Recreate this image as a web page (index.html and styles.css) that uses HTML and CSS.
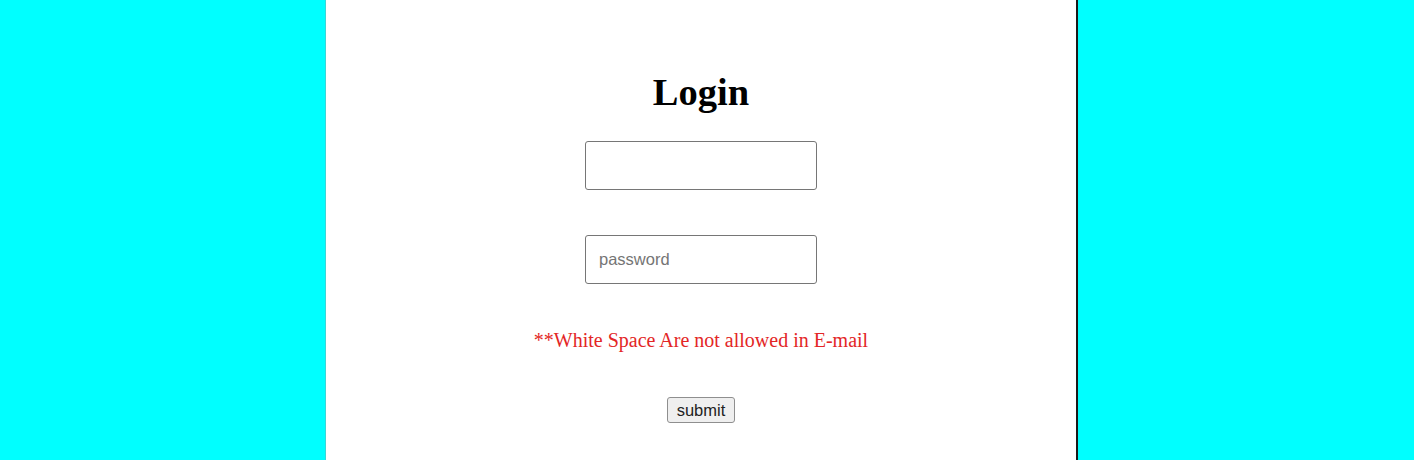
FILE: index.html
```html
<!DOCTYPE html>
<html>
<head>
<meta charset="utf-8">
<link rel="stylesheet" href="styles.css">
</head>
<body>
<div class="panel">
  <form class="login">
    <h1 class="title">Login</h1>
    <input class="field" type="text">
    <input class="field" type="password" placeholder="password">
    <p class="error">**White Space Are not allowed in E-mail</p>
    <button class="submit" type="button">submit</button>
  </form>
</div>
</body>
</html>
```
FILE: styles.css
```css
html, body {
  margin: 0;
  height: 100%;
}
body {
  background: #00ffff;
  font-family: "Liberation Serif", "Times New Roman", serif;
  display: flex;
  padding-left: 325px;
  box-sizing: border-box;
  overflow: hidden;
}
.panel {
  width: 750px;
  height: 100%;
  background: #fff;
  border-left: 1px solid #3cd6d6;
  border-right: 2px solid #1a1a1a;
  box-sizing: content-box;
}
.login {
  display: flex;
  flex-direction: column;
  align-items: center;
}
.title {
  font-size: 38.5px;
  font-weight: bold;
  margin: 68px 0 0;
  line-height: 48px;
}
.field {
  width: 232px;
  height: 49px;
  box-sizing: border-box;
  border: 1px solid #767676;
  border-radius: 3px;
  padding: 0 13px;
  font-family: "Liberation Sans", Arial, sans-serif;
  font-size: 16.5px;
  margin-top: 25px;
}
.field + .field {
  margin-top: 45px;
}
.field::placeholder {
  color: #757575;
}
.error {
  color: #e32626;
  font-size: 20px;
  margin: 44px 0 0;
  line-height: 24px;
}
.submit {
  margin-top: 45px;
  font-family: "Liberation Sans", Arial, sans-serif;
  font-size: 16.5px;
  color: #222;
  padding: 1px 9px;
  height: 26px;
  border: 1px solid #8f8f8f;
  border-radius: 3px;
  background: #efefef;
}
```
